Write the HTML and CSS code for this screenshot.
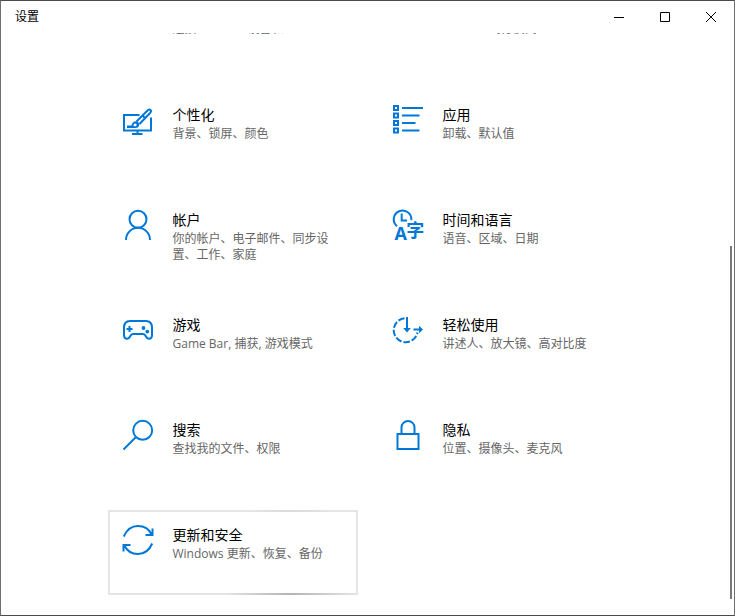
FILE: index.html
```html
<!DOCTYPE html>
<html lang="zh-CN">
<head>
    <meta charset="UTF-8">
    <meta name="viewport" content="width=device-width, initial-scale=1.0">
    <title>设置</title>
    <link rel="stylesheet" href="styles.css">
</head>
<body>
    <div class="window">
        <header class="titlebar">
            <h1 class="caption">设置</h1>
            <div class="controls">
                <button class="control" type="button" aria-label="最小化">
                    <svg width="10" height="10" viewBox="0 0 10 10"><path d="M0 5.5h10"/></svg>
                </button>
                <button class="control" type="button" aria-label="最大化">
                    <svg width="10" height="10" viewBox="0 0 10 10"><path d="M.5.5h9v9h-9z"/></svg>
                </button>
                <button class="control" type="button" aria-label="关闭">
                    <svg width="10" height="10" viewBox="0 0 10 10"><path d="M0 0l10 10M10 0L0 10"/></svg>
                </button>
            </div>
        </header>

        <main class="content">
            <nav class="tiles">
                <a class="tile" href="#">
                    <svg class="icon" viewBox="0 0 32 32"><path d="M9 2h14v28H9zM14 26h4"/></svg>
                    <div class="text">
                        <h2>手机</h2>
                        <p>连接 Android 设备和 iPhone</p>
                    </div>
                </a>
                <a class="tile" href="#">
                    <svg class="icon" viewBox="0 0 32 32"><circle cx="16" cy="16" r="14"/><path d="M2 16h28M16 2v28"/></svg>
                    <div class="text">
                        <h2>网络和 Internet</h2>
                        <p>WLAN、飞行模式、VPN</p>
                    </div>
                </a>
                <a class="tile" href="#">
                    <svg class="icon" viewBox="0 0 32 32">
                        <path d="M17.500 11H2v15.500h27V13.500M15.500 27v3M10 30h10.500"/>
                        <path d="M5 21.500h4.500c.500-3 3-4.800 5.500-4 2.500 1 3 3.500 1.500 5.200-1 1-2.500 1.300-4 1.300H5z" class="solid"/>
                        <path class="hole" d="M11.500 21.500c0-1.300 1-2.200 2-2.100 1.300.2 1.500 1.800.5 2.500-.6.400-1.500.400-2.500.100z"/>
                        <path d="M14.500 17.500L25.800 6.300c2-1.800 4.300.400 2.500 2.400L17.500 20M20.500 11.500l3 3"/>
                    </svg>
                    <div class="text">
                        <h2>个性化</h2>
                        <p>背景、锁屏、颜色</p>
                    </div>
                </a>
                <a class="tile" href="#">
                    <svg class="icon" viewBox="0 0 32 32">
                        <path d="M2 2h4v4H2zM2 9.500h4v4H2zM2 17h4v4H2zM2 24.500h4v4H2z"/>
                        <path d="M10 4h21M10 11.500h17.500M10 19h13.500M10 26.500h17.500"/>
                    </svg>
                    <div class="text">
                        <h2>应用</h2>
                        <p>卸载、默认值</p>
                    </div>
                </a>
                <a class="tile" href="#">
                    <svg class="icon" viewBox="0 0 32 32">
                        <circle cx="16" cy="10.200" r="8.500"/>
                        <path d="M4 31a12 12.200 0 0 1 24 0"/>
                    </svg>
                    <div class="text">
                        <h2>帐户</h2>
                        <p>你的帐户、电子邮件、同步设置、工作、家庭</p>
                    </div>
                </a>
                <a class="tile" href="#">
                    <svg class="icon" viewBox="0 0 32 32">
                        <path d="M5 17.200a8.800 8.800 0 1 1 14.300-6"/>
                        <path d="M9.700 4.500v7H15"/>
                        <text class="latin" x="2.500" y="31">A</text>
                        <text class="hanzi" x="14.200" y="27.500">字</text>
                    </svg>
                    <div class="text">
                        <h2>时间和语言</h2>
                        <p>语音、区域、日期</p>
                    </div>
                </a>
                <a class="tile" href="#">
                    <svg class="icon" viewBox="0 0 32 32">
                        <path d="M8 7h16c4 0 6 2.500 6 7v7c0 4.500-4.500 5-6 1.500-1-2-1.500-2.500-3-2.500H11c-1.500 0-2 .500-3 2.500-1.500 3.500-6 3-6-1.500v-7c0-4.500 2-7 6-7z"/>
                        <path d="M4.500 15h6M7.500 12v6"/>
                        <circle class="solid" cx="21.500" cy="14" r="1.900"/>
                        <circle class="solid" cx="25.300" cy="17.600" r="1.900"/>
                    </svg>
                    <div class="text">
                        <h2>游戏</h2>
                        <p>Game Bar, 捕获, 游戏模式</p>
                    </div>
                </a>
                <a class="tile" href="#">
                    <svg class="icon" viewBox="0 0 32 32">
                        <path d="M12.500 4.300a12 12 0 1 0 13 14.200" stroke-dasharray="6.500 2"/>
                        <path d="M15 3v13M21.500 15.500H29"/>
                        <path class="solid" d="M11.200 14h7.600L15 18.500zM27 11.700v7.600l4-3.800z"/>
                    </svg>
                    <div class="text">
                        <h2>轻松使用</h2>
                        <p>讲述人、放大镜、高对比度</p>
                    </div>
                </a>
                <a class="tile" href="#">
                    <svg class="icon" viewBox="0 0 32 32">
                        <circle cx="20.700" cy="11.300" r="9.500"/>
                        <path d="M14 18L1.500 30.500"/>
                    </svg>
                    <div class="text">
                        <h2>搜索</h2>
                        <p>查找我的文件、权限</p>
                    </div>
                </a>
                <a class="tile" href="#">
                    <svg class="icon" viewBox="0 0 32 32">
                        <path d="M5.500 15h21v15h-21z"/>
                        <path d="M9.500 15V8.500a6.500 6.500 0 0 1 13 0V15"/>
                    </svg>
                    <div class="text">
                        <h2>隐私</h2>
                        <p>位置、摄像头、麦克风</p>
                    </div>
                </a>
                <a class="tile tile-hover" href="#">
                    <svg class="icon" viewBox="0 0 32 32">
                        <path d="M1.800 12.500C5 5 10 2 16 2c6 0 11 3 13.700 8.500M30.500 4.500V11h-7"/>
                        <path d="M30.200 19.500C27 27 22 30 16 30c-6 0-11-3-13.700-8.500M1.500 27.500V21h7"/>
                    </svg>
                    <div class="text">
                        <h2>更新和安全</h2>
                        <p>Windows 更新、恢复、备份</p>
                    </div>
                </a>
            </nav>
            <div class="scrollbar"></div>
        </main>
    </div>
</body>
</html>
```
FILE: styles.css
```css
html,body
{
    height: 100%;
    margin: 0;
}
*
{
    box-sizing: border-box;
}
body
{
    font-family: "Open Sans", "Noto Sans CJK SC", sans-serif;
    font-size: 12px;
    line-height: 16px;
    color: #000;
    background: #fff;
}
.window
{
    height: 100%;
    display: flex;
    flex-direction: column;
    border: 1px solid #6e6e6e;
    border-top-color: #4a4a4a;
    border-bottom-color: #4a4a4a;
}

/* title bar */
.titlebar
{
    flex: none;
    height: 32px;
    display: flex;
    align-items: center;
    justify-content: space-between;
    padding-left: 14px;
}
.caption
{
    margin: 0;
    font-size: 12px;
    font-weight: normal;
    line-height: 18px;
}
.controls
{
    display: flex;
    height: 100%;
}
.control
{
    width: 46px;
    display: flex;
    align-items: center;
    justify-content: center;
    padding: 0;
    border: 0;
    background: none;
}
.control svg
{
    fill: none;
    stroke: #000;
    stroke-width: 1;
}
.control:hover
{
    background: #e5e5e5;
}

/* the list is scrolled to its end */
.content
{
    position: relative;
    flex: 1;
    min-height: 0;
    display: flex;
    flex-direction: column;
    justify-content: flex-end;
    padding-bottom: 20px;
    overflow: hidden;
}
.tiles
{
    display: grid;
    grid-template-columns: repeat(auto-fill, 250px);
    grid-auto-rows: 85px;
    gap: 20px;
    justify-content: center;
    padding: 0 80px;
}
.tile
{
    display: flex;
    gap: 19px;
    padding: 12px 20px 12px 12px;
    border: 2px solid transparent;
    color: inherit;
    text-decoration: none;
}
.tile-hover
{
    border-image: radial-gradient(27% 120% at 73% 100%, #b4b4b4, #e5e5e5) 2;
}
.text h2
{
    margin: 0;
    font-size: 14px;
    font-weight: normal;
    line-height: 22px;
}
.text p
{
    margin: 0;
    color: #666;
}

/* icons */
.icon
{
    flex: none;
    width: 32px;
    height: 32px;
    fill: none;
    stroke: #0078d7;
    stroke-width: 2;
}
.icon .solid
{
    fill: #0078d7;
    stroke: none;
}
.icon .hole
{
    fill: #fff;
    stroke: none;
}
.icon text
{
    fill: #0078d7;
    stroke: none;
}
.icon .latin
{
    font-family: "Open Sans", sans-serif;
    font-size: 18px;
    font-weight: bold;
}
.icon .hanzi
{
    font-family: "Noto Sans CJK SC", sans-serif;
    font-size: 18px;
    font-weight: bold;
}

.scrollbar
{
    position: absolute;
    right: 2px;
    top: 213px;
    bottom: 16px;
    width: 2px;
    background: #7a7a7a;
}
```
